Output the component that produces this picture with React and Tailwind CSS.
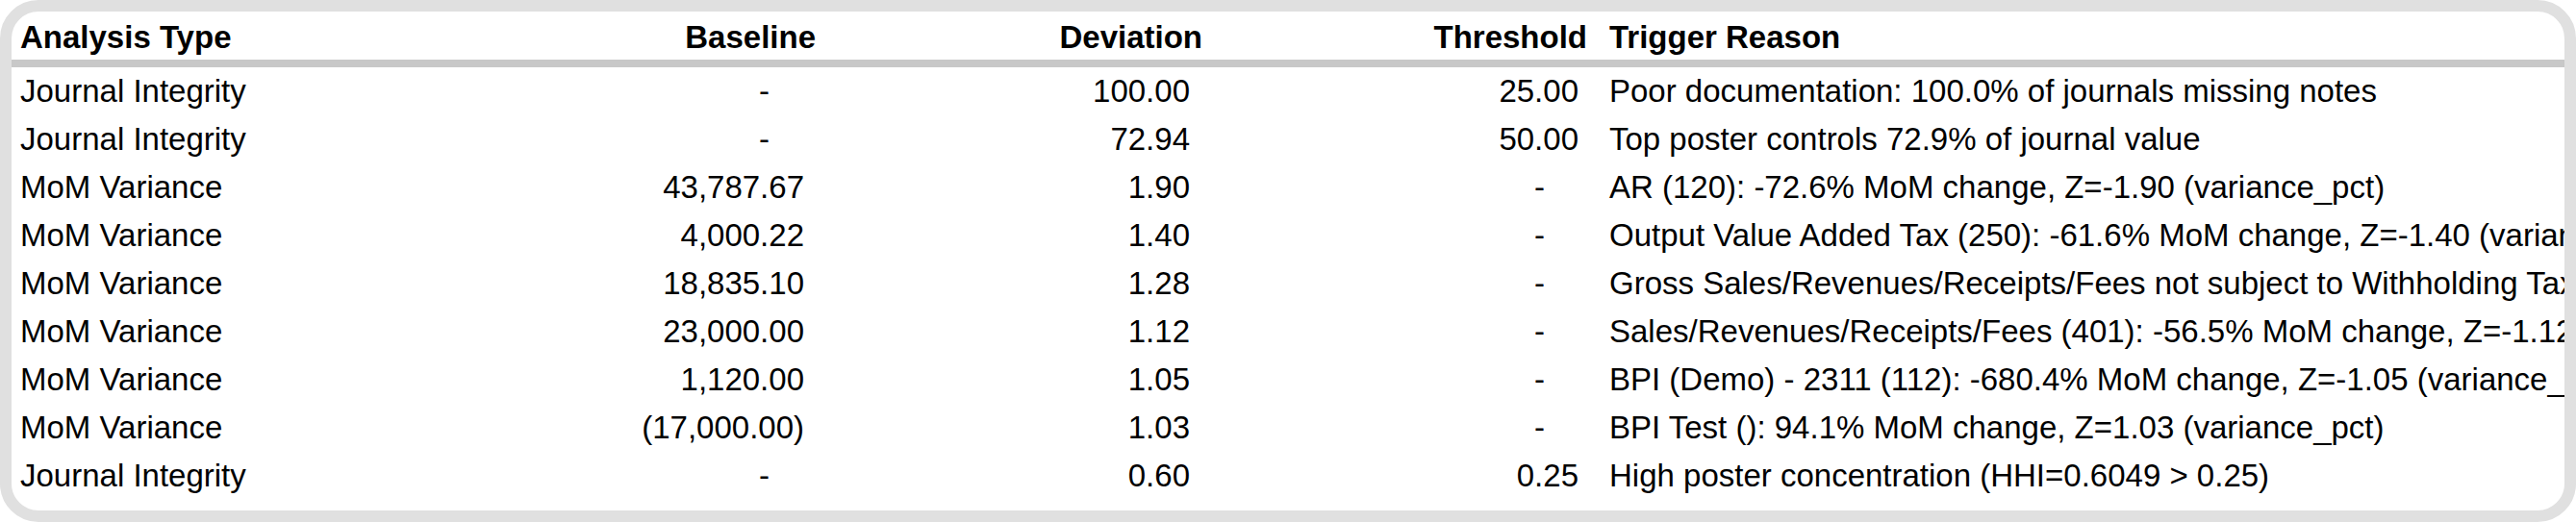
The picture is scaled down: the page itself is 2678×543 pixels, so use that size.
const rows = [
  ["Journal Integrity", "-", "100.00", "25.00", "Poor documentation: 100.0% of journals missing notes"],
  ["Journal Integrity", "-", "72.94", "50.00", "Top poster controls 72.9% of journal value"],
  ["MoM Variance", "43,787.67", "1.90", "-", "AR (120): -72.6% MoM change, Z=-1.90 (variance_pct)"],
  ["MoM Variance", "4,000.22", "1.40", "-", "Output Value Added Tax (250): -61.6% MoM change, Z=-1.40 (variance_pct)"],
  ["MoM Variance", "18,835.10", "1.28", "-", "Gross Sales/Revenues/Receipts/Fees not subject to Withholding Tax"],
  ["MoM Variance", "23,000.00", "1.12", "-", "Sales/Revenues/Receipts/Fees (401): -56.5% MoM change, Z=-1.12 (variance_pct)"],
  ["MoM Variance", "1,120.00", "1.05", "-", "BPI (Demo) - 2311 (112): -680.4% MoM change, Z=-1.05 (variance_pct)"],
  ["MoM Variance", "(17,000.00)", "1.03", "-", "BPI Test (): 94.1% MoM change, Z=1.03 (variance_pct)"],
  ["Journal Integrity", "-", "0.60", "0.25", "High poster concentration (HHI=0.6049 > 0.25)"],
]

const grid = "grid grid-cols-[588px_248px_402px_400px_1fr] whitespace-nowrap"

const App = () => {
  return (
    <div className="w-[2678px] h-[543px] bg-white font-['Liberation_Sans',Arial,sans-serif] text-[33px] text-black">
      <div className="h-full rounded-[40px] border-[12px] border-[#e0e0e0] bg-white overflow-hidden">
        {/* Header */}
        <div className={`${grid} h-[58px] pt-[3px] leading-[47px] font-bold border-b-[8px] border-[#c8c8c8]`}>
          <div className="pl-[9px]">Analysis Type</div>
          <div className="text-right">Baseline</div>
          <div className="text-right">Deviation</div>
          <div className="text-right">Threshold</div>
          <div className="pl-[23px]">Trigger Reason</div>
        </div>

        {/* Rows */}
        {rows.map((r, i) => (
          <div key={i} className={`${grid} h-[50px] leading-[50px]`}>
            <div className="pl-[9px]">{r[0]}</div>
            <div className={r[1] === "-" ? "text-right pr-[48px]" : "text-right pr-[12px]"}>{r[1]}</div>
            <div className="text-right pr-[13px]">{r[2]}</div>
            <div className={r[3] === "-" ? "text-right pr-[44px]" : "text-right pr-[9px]"}>{r[3]}</div>
            <div className="pl-[23px]">{r[4]}</div>
          </div>
        ))}
      </div>
    </div>
  )
}

export default App
